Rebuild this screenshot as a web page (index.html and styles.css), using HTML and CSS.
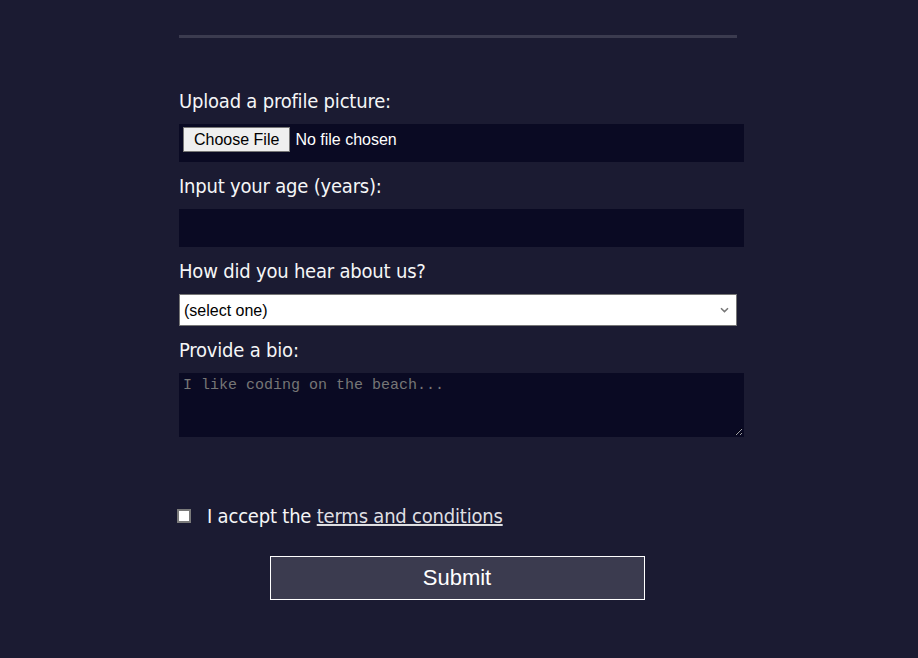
FILE: index.html
```html
<!DOCTYPE html>
<html lang="en">
<head>
<meta charset="utf-8">
<title>Registration Form</title>
<link rel="stylesheet" href="styles.css">
</head>
<body>
<form class="form" action="#" method="post">
  <div class="prev-fieldset"></div>
  <fieldset class="fieldset">
    <label class="field" for="profile-picture">
      <span class="label-text">Upload a profile picture:</span>
      <input class="control file" id="profile-picture" type="file" name="file">
    </label>
    <label class="field" for="age">
      <span class="label-text">Input your age (years):</span>
      <input class="control" id="age" type="number" name="age" min="13" max="120">
    </label>
    <label class="field" for="referrer">
      <span class="label-text">How did you hear about us?</span>
      <select class="select" id="referrer" name="referrer">
        <option value="">(select one)</option>
        <option value="1">freeCodeCamp News</option>
        <option value="2">freeCodeCamp YouTube Channel</option>
        <option value="3">freeCodeCamp Forum</option>
        <option value="4">Other</option>
      </select>
    </label>
    <label class="field" for="bio">
      <span class="label-text">Provide a bio:</span>
      <textarea class="control bio" id="bio" name="bio" placeholder="I like coding on the beach..."></textarea>
    </label>
  </fieldset>
  <label class="terms" for="terms-and-conditions">
    <input class="checkbox" id="terms-and-conditions" type="checkbox" name="terms" required>
    <span class="label-text">I accept the <a class="link" href="#">terms and conditions</a></span>
  </label>
  <div class="actions">
    <button class="submit" type="submit">Submit</button>
  </div>
</form>
</body>
</html>
```

FILE: styles.css
```css
html, body {
  margin: 0;
  padding: 0;
}

body {
  background: #1b1b32;
  color: #f5f6f7;
  font-family: "DejaVu Sans Condensed", "DejaVu Sans", Verdana, sans-serif;
  font-stretch: condensed;
  font-size: 20px;
  height: 658px;
  overflow: hidden;
}

.form {
  width: 558px;
  margin: 0 auto;
  position: relative;
  left: -1px;
}

.prev-fieldset {
  height: 35px;
  border-bottom: 3px solid #3b3b4f;
}

.fieldset {
  border: none;
  margin: 0;
  padding: 51px 0 0 0;
  display: flex;
  flex-direction: column;
  gap: 12px;
  min-width: 0;
}

.field {
  display: flex;
  flex-direction: column;
  align-items: flex-start;
}

.label-text {
  display: block;
  line-height: 24px;
  letter-spacing: -0.2px;
}

.control {
  box-sizing: border-box;
  width: 565px;
  height: 38px;
  margin: 11px 0 0 0;
  background: #0a0a23;
  border: 1px solid #0a0a23;
  color: #ffffff;
  font-family: "Liberation Sans", Arial, sans-serif;
  font-size: 16px;
  font-stretch: normal;
}

.file {
  padding: 2px 3px;
  display: flex;
  align-items: flex-start;
}

.file::file-selector-button {
  font-family: "Liberation Sans", Arial, sans-serif;
  font-size: 16px;
  color: #000000;
  background: #efefef;
  border: 1px solid #767676;
  border-radius: 0;
  height: 25px;
  padding: 0 10px;
  margin: 0 5px 0 0;
}

.select {
  box-sizing: border-box;
  width: 558px;
  height: 32px;
  margin: 11px 0 0 0;
  padding: 0 4px;
  appearance: none;
  -webkit-appearance: none;
  background-color: #ffffff;
  background-image: url("data:image/svg+xml;utf8,<svg xmlns='http://www.w3.org/2000/svg' width='9' height='6' viewBox='0 0 9 6'><path d='M1 1.2 L4.5 4.6 L8 1.2' fill='none' stroke='%23777777' stroke-width='1.5'/></svg>");
  background-repeat: no-repeat;
  background-position: right 7px center;
  color: #000000;
  border: 1px solid #767676;
  border-radius: 0;
  font-family: "Liberation Sans", Arial, sans-serif;
  font-size: 16px;
  font-stretch: normal;
}

.bio {
  height: 64px;
  padding: 3px 3px;
  font-family: "Liberation Mono", "DejaVu Sans Mono", monospace;
  font-size: 15px;
  resize: both;
}

.bio::placeholder {
  color: #767676;
}

.terms {
  display: flex;
  align-items: center;
  margin-top: 67px;
  height: 24px;
}

.checkbox {
  appearance: none;
  -webkit-appearance: none;
  box-sizing: border-box;
  width: 14px;
  height: 14px;
  margin: 0 16px 0 -2px;
  background: #ffffff;
  border: 2px solid #7a7a7a;
  border-radius: 0;
  flex: none;
}

.link {
  color: #dfdfe2;
  text-decoration: underline;
}

.actions {
  display: flex;
  justify-content: center;
  margin-top: 28px;
}

.submit {
  box-sizing: border-box;
  width: 375px;
  height: 44px;
  background: #3b3b4f;
  border: 1px solid #ffffff;
  color: #ffffff;
  font-family: "Liberation Sans", Arial, sans-serif;
  font-size: 22px;
  padding: 0;
  position: relative;
  left: -1px;
}
```
